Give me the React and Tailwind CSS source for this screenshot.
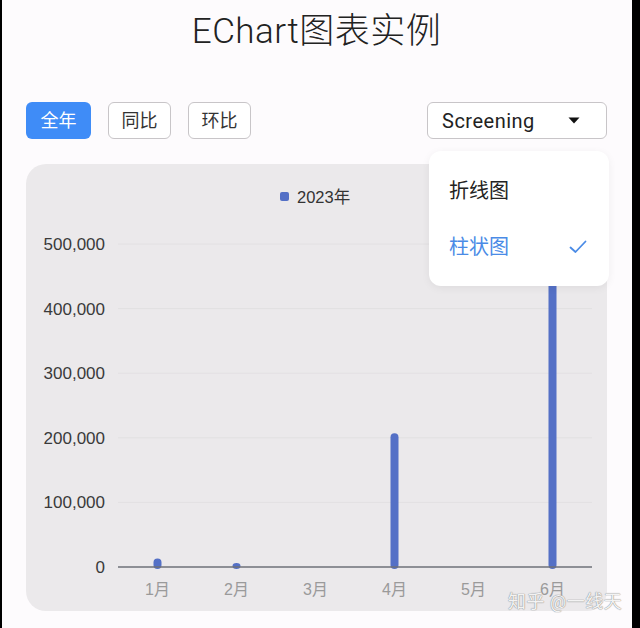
import React from "react";

const yTicks = [0, 100000, 200000, 300000, 400000, 500000];
const months = ["1月", "2月", "3月", "4月", "5月", "6月"];
const values = [13000, 6000, 0, 207000, 0, 560000];

// chart geometry, in card coordinates
const X0 = 92;
const X1 = 566;
const Y0 = 403;
const STEP = 64.6;
const CAT = (X1 - X0) / 6;

const Chart = () => (
  <svg width="581" height="447" className="block">
    {/* legend */}
    <rect x="254" y="28" width="9" height="9" rx="2" fill="#5470c6" />
    <text x="271" y="39" fontSize="16.5" fill="#333" fontFamily="'Liberation Sans', 'Noto Sans CJK SC', sans-serif">
      2023年
    </text>

    {yTicks.map((t, i) => {
      const y = Y0 - i * STEP;
      return (
        <g key={t}>
          {i > 0 && <line x1={X0} x2={X1} y1={y} y2={y} stroke="#e2e0e2" strokeWidth="1" />}
          <text
            x="79"
            y={y + 6}
            textAnchor="end"
            fontSize="17"
            fill="#3a3a3a"
            fontFamily="'Liberation Sans', sans-serif"
          >
            {t.toLocaleString("en-US")}
          </text>
        </g>
      );
    })}

    {values.map((v, i) => {
      if (!v) return null;
      const h = (v / 100000) * STEP;
      const cx = X0 + CAT * i + CAT / 2;
      return <rect key={i} x={cx - 4} y={Y0 - h} width="8" height={h + 2} rx="4" fill="#5470c6" />;
    })}

    <line x1={X0} x2={X1} y1={Y0} y2={Y0} stroke="#6e7079" strokeWidth="1.5" />

    {months.map((m, i) => (
      <text
        key={m}
        x={X0 + CAT * i + CAT / 2}
        y={Y0 + 28}
        textAnchor="middle"
        fontSize="16"
        fill="#9a9a9a"
        fontFamily="'Liberation Sans', 'Noto Sans CJK SC', sans-serif"
      >
        {m}
      </text>
    ))}
  </svg>
);

export default function App() {
  return (
    <div
      className="relative w-[640px] h-[628px] overflow-hidden bg-[#fdfbfd] border-l-2 border-r-8 border-black"
      style={{ fontFamily: "Roboto, 'Noto Sans CJK SC', sans-serif" }}
    >
      <div className="pl-6 pr-[25px]">
        <h1 className="mt-3 text-center text-[35px] leading-[40px] font-light text-[#222] tracking-[0.5px]">
          EChart图表实例
        </h1>

        <div className="mt-[50px] flex items-center">
          <div className="flex gap-[17px]">
            <button className="w-[65px] h-[37px] rounded-md bg-[#3f8cf7] text-white text-[18px]">全年</button>
            <button className="w-[63px] h-[37px] rounded-md border border-[#c8c5c8] bg-white text-[#333] text-[18px]">
              同比
            </button>
            <button className="w-[63px] h-[37px] rounded-md border border-[#c8c5c8] bg-white text-[#333] text-[18px]">
              环比
            </button>
          </div>
          <div className="ml-auto w-[180px] h-[37px] rounded-md border border-[#c8c5c8] bg-white flex items-center pl-[14px] pr-[26px]">
            <span className="text-[20px] text-[#222] tracking-[0.5px]">Screening</span>
            <svg className="ml-auto" width="12" height="7" viewBox="0 0 12 7">
              <path d="M0.5 0.5 H11.5 L6 6.5 Z" fill="#111" />
            </svg>
          </div>
        </div>

        <div className="mt-[25px] h-[447px] rounded-[20px] bg-[#ebe9eb] overflow-hidden">
          <Chart />
        </div>
      </div>

      {/* open dropdown menu */}
      <div className="absolute left-[427px] top-[151px] w-[180px] h-[135px] rounded-xl bg-white shadow-[0_2px_8px_rgba(0,0,0,0.06)] py-[18px]">
        <div className="h-[44px] flex items-center pl-[20px] text-[20px] text-[#222]">折线图</div>
        <div className="mt-[12px] h-[44px] flex items-center pl-[20px] pr-[22px] text-[20px] text-[#4a8be6]">
          柱状图
          <svg className="ml-auto" width="18" height="14" viewBox="0 0 18 14">
            <path d="M1.5 7.5 L6.5 12 L16.5 1.5" fill="none" stroke="#4a8be6" strokeWidth="1.8" strokeLinecap="round" strokeLinejoin="round" />
          </svg>
        </div>
      </div>

      {/* watermark */}
      <div
        className="absolute left-[506px] top-[588px] text-[18px] text-white/90 tracking-[0.5px]"
        style={{ textShadow: "0 0 1px #888, 0 0 1px #888" }}
      >
        知乎 @一线天
      </div>
    </div>
  );
}
